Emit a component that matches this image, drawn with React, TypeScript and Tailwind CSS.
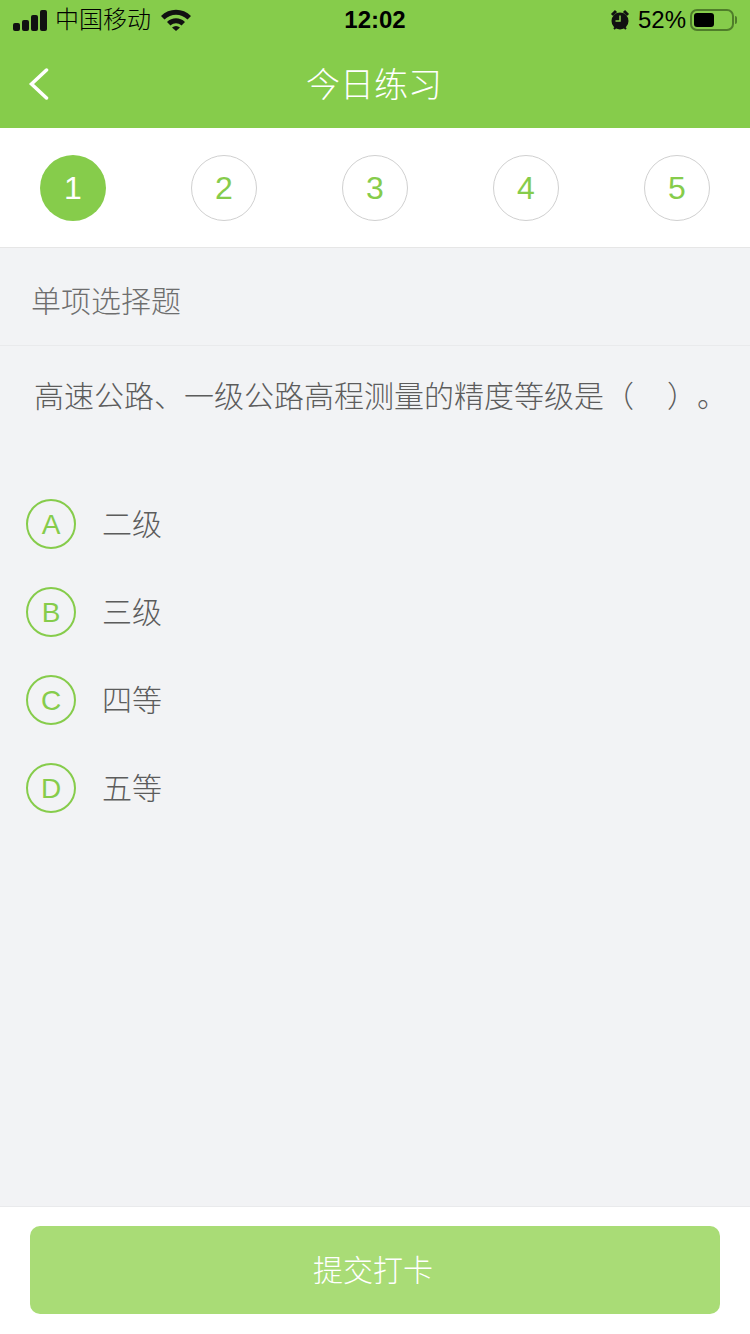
const cjk = 'font-["Liberation_Sans","Noto_Sans_CJK_SC",sans-serif]'

function StatusBar() {
  return (
    <div className="h-10 flex items-center justify-between px-[13px] text-black text-2xl">
      <div className="flex items-center w-[240px]">
        <div className="flex items-end gap-[2px] h-[21px]">
          <span className="w-[7px] h-[8px] bg-[#111] rounded-[2px]" />
          <span className="w-[7px] h-[11px] bg-[#111] rounded-[2px]" />
          <span className="w-[7px] h-[16px] bg-[#111] rounded-[2px]" />
          <span className="w-[7px] h-[21px] bg-[#111] rounded-[2px]" />
        </div>
        <span className="ml-[8px] font-light">中国移动</span>
        <svg className="ml-[10px]" width="30" height="22" viewBox="0 0 30 22">
          <path d="M0 7C8 -1.500 22 -1.500 30 7l-3.500 3.500C20 4 10 4 3.500 10.500z" fill="#111" />
          <path d="M6 13C11 8 19 8 24 13l-3.500 3.500C17 13.500 13 13.500 9.500 16.500z" fill="#111" />
          <path d="M11 18.500c2.500-2 5.500-2 8 0l-4 3.500z" fill="#111" />
        </svg>
      </div>
      <span className="font-semibold">12:02</span>
      <div className="flex items-center justify-end w-[240px]">
        <svg width="20" height="22" viewBox="0 0 20 22">
          <circle cx="10" cy="12" r="8.500" fill="#111" />
          <path d="M2 6l4-4M18 6l-4-4" stroke="#111" strokeWidth="3" />
          <path d="M4 20l2-2M16 20l-2-2" stroke="#111" strokeWidth="2" />
          <path d="M10 6.500V12H5.500" stroke="#86cc4b" strokeWidth="1.500" fill="none" />
        </svg>
        <span className="ml-[8px] font-light">52%</span>
        <div className="ml-[4px] flex items-center">
          <div className="w-[44px] h-[22px] rounded-[7px] border-2 border-[#4f7d2a] p-[2px]">
            <div className="w-[20px] h-full rounded-[3px] bg-black" />
          </div>
          <span className="ml-[1px] w-[2px] h-[8px] bg-[#4f7d2a] rounded-r-sm" />
        </div>
      </div>
    </div>
  )
}

function Step({ n, active }: { n: number; active?: boolean }) {
  return (
    <div
      className={
        active
          ? 'w-[66px] h-[66px] rounded-full bg-[#86cc4b] text-white flex items-center justify-center text-[32px] font-light'
          : 'w-[66px] h-[66px] rounded-full border border-[#d0d0d0] text-[#86cc4b] flex items-center justify-center text-[32px] font-light'
      }
    >
      {n}
    </div>
  )
}

function Option({ letter, label }: { letter: string; label: string }) {
  return (
    <div className="h-[88px] flex items-center pl-[26px]">
      <div className="w-[50px] h-[50px] rounded-full border-2 border-[#86cc4b] text-[#86cc4b] flex items-center justify-center pt-[2px] text-[28px] font-light">
        {letter}
      </div>
      <span className="ml-[26px] pt-[1px] text-[30px] leading-none text-[#5c5c5c] font-light">{label}</span>
    </div>
  )
}

const steps = [1, 2, 3, 4, 5]
const options = [
  { letter: 'A', label: '二级' },
  { letter: 'B', label: '三级' },
  { letter: 'C', label: '四等' },
  { letter: 'D', label: '五等' },
]

export default function App() {
  return (
    <div className={`${cjk} w-[750px] h-[1334px] flex flex-col bg-[#f2f3f5]`}>
      <div className="bg-[#86cc4b] h-[128px]">
        <StatusBar />
        <div className="relative h-[88px] flex items-center justify-center text-white text-[34px] font-light pt-[3px] pr-[2px]">
          <svg className="absolute left-[28px] top-[28px]" width="22" height="32" viewBox="0 0 22 32">
            <path d="M18.500 2L3.500 16l15 14" stroke="#fff" strokeWidth="3.500" fill="none" strokeLinecap="round" />
          </svg>
          今日练习
        </div>
      </div>

      <div className="bg-white h-[120px] border-b border-[#e6e6e6] flex items-center justify-between px-10 pt-[1px]">
        {steps.map((n) => (
          <Step key={n} n={n} active={n === 1} />
        ))}
      </div>

      <div className="h-[98px] border-b border-[#e9eaec] flex items-center pl-[31px] pt-[9px] text-[30px] text-[#6e6e6e] font-light">
        单项选择题
      </div>

      <p className="pl-[34px] pt-[31px] h-[110px] text-[30px] leading-[40px] text-[#5c5c5c] font-light whitespace-nowrap [text-spacing-trim:space-all]">
        高速公路、一级公路高程测量的精度等级是（<span className="inline-block w-[33px]" />）。
      </p>

      <div className="pt-[24px]">
        {options.map((o) => (
          <Option key={o.letter} letter={o.letter} label={o.label} />
        ))}
      </div>

      <div className="mt-auto h-[128px] bg-white border-t border-[#e9eaec] pt-[19px] px-[30px]">
        <button className="w-full h-[88px] rounded-[10px] bg-[#a9dc76] text-white text-[30px] font-light pr-[4px]">提交打卡</button>
      </div>
    </div>
  )
}
